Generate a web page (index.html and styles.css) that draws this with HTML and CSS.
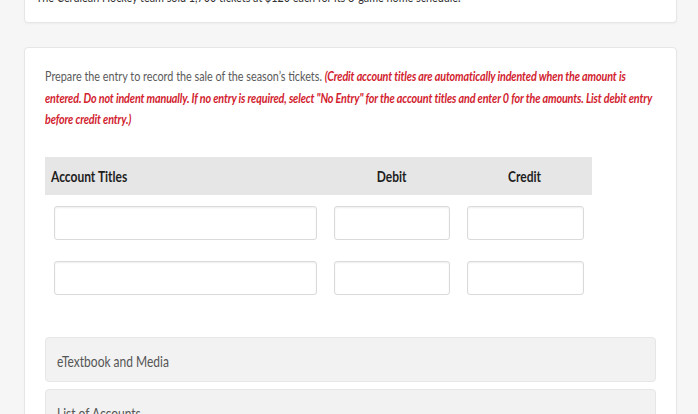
FILE: index.html
```html
<!DOCTYPE html>
<html lang="en">
<head>
<meta charset="utf-8">
<title>Journal entry</title>
<link rel="stylesheet" href="styles.css">
</head>
<body>
<div class="page">
  <section class="card card-top">
    <p class="squeeze text">The Cerulean Hockey team sold 1,700 tickets at $120 each for its 8-game home schedule.</p>
  </section>

  <section class="card card-main">
    <p class="squeeze prompt">Prepare the entry to record the sale of the season’s tickets. <em class="note">(Credit account titles are automatically indented when the amount is entered. Do not indent manually. If no entry is required, select "No Entry" for the account titles and enter 0 for the amounts. List debit entry before credit entry.)</em></p>

    <div class="journal">
      <div class="jrow jhead">
        <div class="jcell"><span class="hlabel">Account Titles</span></div>
        <div class="jcell center"><span class="hlabel mid">Debit</span></div>
        <div class="jcell center"><span class="hlabel mid">Credit</span></div>
      </div>
      <div class="jrow">
        <div class="jcell"><input class="field" type="text" aria-label="Account title 1"></div>
        <div class="jcell"><input class="field" type="text" aria-label="Debit 1"></div>
        <div class="jcell"><input class="field" type="text" aria-label="Credit 1"></div>
      </div>
      <div class="jrow">
        <div class="jcell"><input class="field" type="text" aria-label="Account title 2"></div>
        <div class="jcell"><input class="field" type="text" aria-label="Debit 2"></div>
        <div class="jcell"><input class="field" type="text" aria-label="Credit 2"></div>
      </div>
    </div>

    <div class="accordions">
      <div class="acc"><span class="acc-label">eTextbook and Media</span></div>
      <div class="acc"><span class="acc-label">List of Accounts</span></div>
    </div>
  </section>
</div>
</body>
</html>
```

FILE: styles.css
```css
html, body {
  height: 100%;
  overflow: hidden;
}

body {
  margin: 0;
  background: #f6f6f6;
  font-family: Lato, "Open Sans", sans-serif;
  color: #555;
}

.page {
  padding: 0 21px 0 24px;
}

.card {
  background: #fff;
  border: 1px solid #e6e6e6;
  border-radius: 4px;
  box-shadow: 0 1px 2px rgba(0, 0, 0, 0.04);
  overflow: hidden;
}

.card-top {
  margin-top: -30px;
  padding: 16px 12px 14px 11px;
}

.card-main {
  margin-top: 24px;
  padding: 18px 20px 40px 20px;
}

.squeeze {
  margin: 0;
  width: 125%;
  transform: scaleX(0.8);
  transform-origin: 0 0;
}

.text {
  font-size: 13.5px;
  line-height: 21px;
  color: #333;
  white-space: nowrap;
}

.prompt {
  width: calc((100% + 3px) * 1.25);
  font-size: 13.5px;
  line-height: 21.5px;
  color: #5a5a5a;
}

.note {
  color: #d2222e;
  font-weight: 700;
  font-style: italic;
  letter-spacing: -0.18px;
}

.journal {
  margin-top: 26.5px;
  width: 547px;
}

.jrow {
  display: grid;
  grid-template-columns: 280px 133px 134px;
  padding: 11px 0 10px;
}

.jhead {
  background: #e6e6e6;
  height: 38px;
  padding: 0;
  box-sizing: border-box;
}

.jcell {
  display: flex;
  align-items: center;
  padding: 0 8px 0 9px;
  min-width: 0;
}

.jhead .jcell {
  padding: 0 0 0 6px;
}

.jhead .jcell.center {
  justify-content: center;
  padding: 0;
}

.hlabel {
  display: inline-block;
  font-size: 15px;
  font-weight: 700;
  color: #1e1e1e;
  white-space: nowrap;
  transform: scaleX(0.8);
  transform-origin: 0 50%;
}

.hlabel.mid {
  transform-origin: 50% 50%;
}

.field {
  display: block;
  width: 100%;
  height: 34px;
  box-sizing: border-box;
  margin: 0;
  border: 1px solid #dadada;
  border-radius: 3px;
  background: #fff;
  box-shadow: inset 0 1px 2px rgba(0, 0, 0, 0.07);
  font: inherit;
}

.accordions {
  margin-top: 32px;
  display: flex;
  flex-direction: column;
  gap: 7px;
}

.acc {
  height: 45px;
  box-sizing: border-box;
  display: flex;
  align-items: center;
  padding: 2px 0 0 11px;
  background: #f2f2f2;
  border: 1px solid #e6e6e6;
  border-radius: 4px;
}

.acc-label {
  display: inline-block;
  font-size: 15px;
  color: #555;
  white-space: nowrap;
  transform: scaleX(0.8);
  transform-origin: 0 50%;
}
```
